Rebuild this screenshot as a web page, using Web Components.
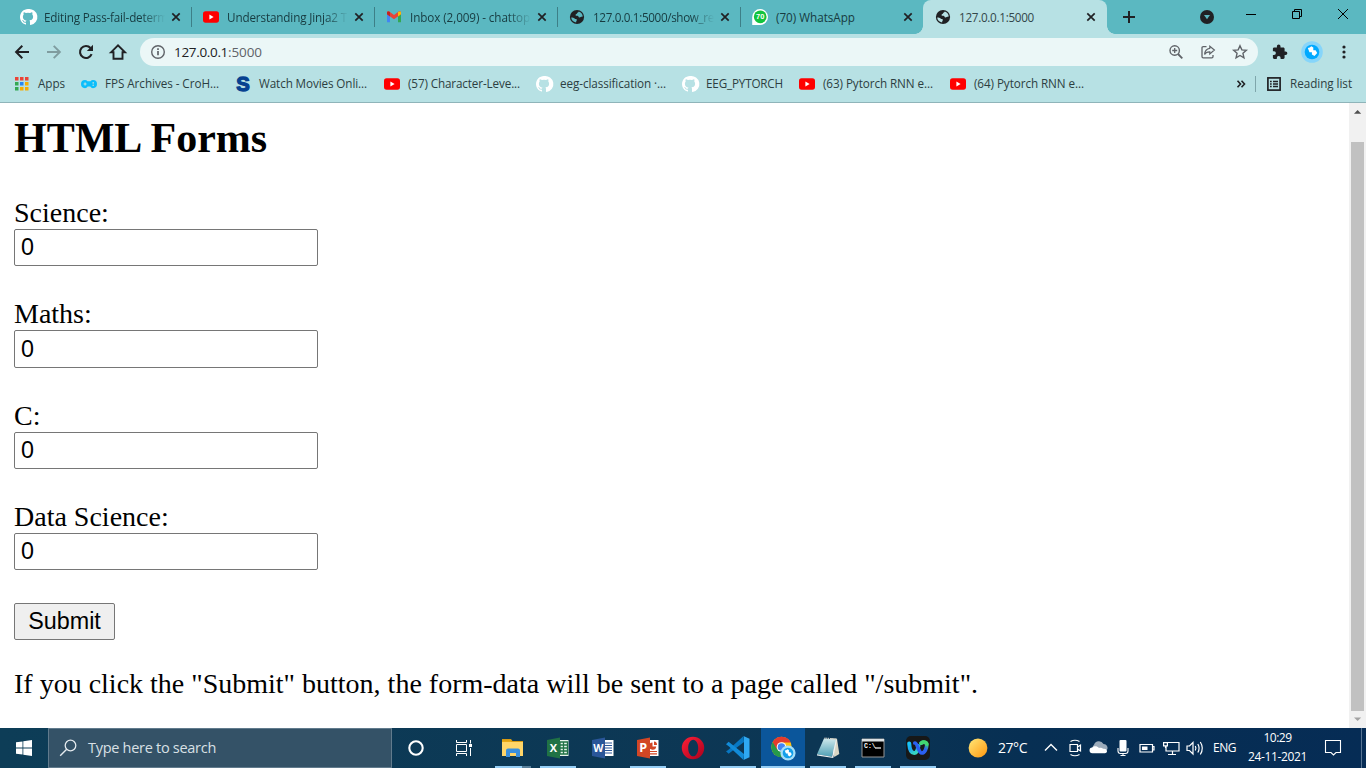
<!DOCTYPE html>
<html lang="en">
<head>
<meta charset="utf-8">
<title>127.0.0.1:5000</title>
<style>
html,body{margin:0;height:100%;overflow:hidden;background:#fff}
</style>
</head>
<body>
<desktop-screen></desktop-screen>
<script>
const octo='<path fill="#fff" d="M8 0C3.6 0 0 3.6 0 8c0 3.5 2.3 6.500 5.500 7.600.4.100.5-.2.5-.4V13.700c-2.200.5-2.700-.9-2.700-.9-.4-.9-.9-1.200-.9-1.200-.7-.5.1-.5.1-.5.8.1 1.200.8 1.200.8.700 1.200 1.900.9 2.300.7.100-.5.3-.9.5-1.100-1.800-.2-3.600-.9-3.600-4 0-.9.300-1.600.8-2.100-.1-.2-.4-1 .1-2.100 0 0 .7-.2 2.200.8a7.500 7.500 0 0 1 4 0c1.500-1 2.200-.8 2.200-.8.4 1.100.2 1.900.1 2.100.500.600.8 1.300.8 2.100 0 3.100-1.900 3.700-3.700 3.900.3.300.6.800.6 1.500v2.700c0 .2.100.5.600.4A8 8 0 0 0 8 0Z"/>';
const ICONS={
github:[16,16,octo],
youtube:[16,16,'<rect x="0" y="2.300" width="16" height="11.400" rx="2.600" fill="#f00"/><path d="M6.400 5.600v4.800L10.600 8Z" fill="#fff"/>'],
gmail:[16,16,'<path d="M1 4v9.300h3V7z" fill="#4285f4"/><path d="M15 4v9.300h-3V7z" fill="#34a853"/><path d="M1 3.800C1 2.400 2.700 2 3.600 2.700L8 6l4.400-3.300C13.300 2 15 2.400 15 3.800V5.300L8 10.300 1 5.300Z" fill="#ea4335"/><path d="M1 3.800C1 2.400 2.700 2 4 3.100V7.400L1 5.300Z" fill="#c5221f"/><path d="M15 3.800C15 2.400 13.300 2 12 3.100V7.400l3-2.100Z" fill="#fbbc04"/>'],
globe:[16,16,'<circle cx="8" cy="8" r="7.100" fill="#202124"/><path d="M2.200 8.600c1.400.1 2.600.1 3.400.8.7.7 2 .5 2.300 1.300.2.900-.9 1-.8 2.800C4.200 13.200 2.300 11 2.200 8.600ZM9.800 2.500c-.2.900-1.600.9-1.700 1.800-.1.800-1.500.6-1.500 1.600s1 .8 1.900.8c1 0 .8 1.600 2 1.700 1.100.1 1.100-1 3.300-.9C13.500 5 12 3.200 9.800 2.500Z" fill="var(--cut,#5bb8c1)"/>'],
whatsapp:[16,16,'<path d="M.2 16V8A7.900 7.900 0 1 1 8 15.900Z" fill="#fff"/><circle cx="8.200" cy="7.800" r="6.400" fill="#12c43e"/><text x="8.200" y="10.400" font-family="Liberation Sans,sans-serif" font-size="7.500" font-weight="700" fill="#fff" text-anchor="middle">70</text>'],
close:[16,16,'<path d="m4.300 4.300 7.400 7.400m0-7.400-7.400 7.400" stroke="#202124" stroke-width="1.700"/>'],
plus:[16,16,'<path d="M8 2v12M2 8h12" stroke="#202124" stroke-width="2"/>'],
down:[16,16,'<circle cx="8" cy="8" r="7" fill="#202124"/><path d="M5 6h6l-3 4.200Z" fill="#5bb8c1"/>'],
min:[12,12,'<path d="M1 6.500h10" stroke="#000"/>'],
max:[12,12,'<path d="M1.500 3.500h7v7h-7zM3.500 3.500v-2h7v7h-2" fill="none" stroke="#000"/>'],
x:[12,12,'<path d="m1 1 10 10m0-10L1 11" stroke="#000" stroke-width="1"/>'],
back:[16,16,'<path d="M15 8H2.500M8.300 1.800 2.100 8l6.200 6.200" fill="none" stroke="#202124" stroke-width="2"/>'],
fwd:[16,16,'<path d="M1 8h12.500M7.700 1.800 13.900 8l-6.200 6.200" fill="none" stroke="#7f9c9f" stroke-width="1.900"/>'],
reload:[16,16,'<path d="M13.600 10.200A6 6 0 1 1 12.500 4" fill="none" stroke="#202124" stroke-width="2.100"/><path d="M15 .8V7H8.800Z" fill="#202124"/>'],
home:[18,18,'<path d="M2 9.300 9 2.300l7 7H13.500v6.400h-9V9.300Z" fill="none" stroke="#202124" stroke-width="1.900"/>'],
info:[16,16,'<circle cx="8" cy="8" r="6.300" fill="none" stroke="#5f6368" stroke-width="1.400"/><path d="M8 7v4.300M8 4.300v1.600" stroke="#5f6368" stroke-width="1.700"/>'],
zoom:[16,16,'<circle cx="6.700" cy="6.500" r="4.700" fill="none" stroke="#5f6368" stroke-width="1.400"/><path d="m10 10 4.300 4.300" stroke="#5f6368" stroke-width="1.800"/><path d="M6.700 4v5M4.200 6.500h5" stroke="#5f6368" stroke-width="1.300"/>'],
share:[16,16,'<path d="M6.500 2.600H3.200Q2 2.600 2 3.800v8.800q0 1.200 1.200 1.200h8.600q1.200 0 1.200-1.200V11" fill="none" stroke="#5f6368" stroke-width="1.300"/><path d="M9.800 2.200 14.400 6 9.800 9.900V7.800C7.200 7.700 5.700 8.500 4.600 10.500 4.800 7.200 6.500 4.700 9.800 4.300Z" fill="none" stroke="#5f6368" stroke-width="1.200"/>'],
star:[16,16,'<path d="m8 1.700 1.850 4.150 4.500.45-3.400 3 1 4.500L8 11.500l-3.950 2.300 1-4.500-3.400-3 4.500-.45Z" fill="none" stroke="#5f6368" stroke-width="1.400"/>'],
puzzle:[16,16,'<path d="M13.600 7.500h-1V4.700c0-.7-.6-1.300-1.300-1.300H8.500V2.300a1.800 1.800 0 0 0-3.600 0v1.100H2.200C1.500 3.400.9 4 .9 4.700v2.500H2a1.900 1.900 0 0 1 0 3.800H.9v2.600c0 .7.600 1.300 1.300 1.300h2.600v-1a1.900 1.900 0 0 1 3.800 0v1h2.700c.7 0 1.300-.6 1.300-1.300V11h1a1.750 1.750 0 0 0 0-3.500Z" fill="#202124"/>'],
avatar:[22,22,'<circle cx="11" cy="11" r="10.800" fill="#86d5fa"/><circle cx="11" cy="11" r="7.300" fill="#00a9ff"/><path d="M6.800 7q2.200 0 3.500-1.700l2 1.200v2.800h2.300l1.600 2.600-2.700 3-2.600-1.500v-2.200H8.500Z" fill="#fff"/>'],
dots:[16,16,'<g fill="#202124"><circle cx="8" cy="3" r="1.600"/><circle cx="8" cy="8" r="1.600"/><circle cx="8" cy="13" r="1.600"/></g>'],
apps:[14,14,'<g><path fill="#ea4335" d="M0 0h3.500v3.500H0zM5 0h3.500v3.500H5zM10 0h3.500v3.500H10z"/><path fill="#34a853" d="M0 5h3.500v3.500H0zM0 10h3.500v3.500H0z"/><path fill="#2787f5" d="M5 5h3.500v3.500H5z"/><path fill="#f6ad05" d="M10 5h3.500v3.500H10zM5 10h3.500v3.500H5zM10 10h3.500v3.500H10z"/></g>'],
pad:[16,16,'<path d="M4 4q1.600 0 2.500 1.200h3Q10.400 4 12 4a4 4.100 0 0 1 0 8.200q-1.800 0-2.700-1.600H6.700Q5.800 12.200 4 12.200A4 4.100 0 0 1 4 4Z" fill="#0cbefb"/><path d="M2.600 8h3M4.100 6.500v3" stroke="#b7e1e4" stroke-width="1.200"/><circle cx="12.200" cy="6.900" r=".8" fill="#b7e1e4"/><circle cx="12.200" cy="9.300" r=".8" fill="#b7e1e4"/>'],
ess:[16,16,'<text x="8" y="15" text-anchor="middle" font-family="Liberation Sans,sans-serif" font-weight="700" font-size="20" textLength="13.500" lengthAdjust="spacingAndGlyphs" fill="#074190" stroke="#074190" stroke-width="1.300">S</text>'],
more:[10,10,'<path d="m1.500 1.800 3 3.200-3 3.200M5.500 1.800l3 3.200-3 3.200" fill="none" stroke="#202124" stroke-width="1.600"/>'],
list:[16,16,'<rect x="1.900" y="1.900" width="12.200" height="12.200" fill="none" stroke="#202124" stroke-width="1.700"/><path d="M4 5.500h1.700M4 8h1.700M4 10.500h1.700M7 5.500h5M7 8h5M7 10.500h5" stroke="#202124" stroke-width="1.300"/>'],
windows:[16,16,'<path d="M0 2.300 6.500 1.400v6.200H0zM7.300 1.200 16 0v7.600H7.300zM0 8.400h6.500v6.200L0 13.700zM7.300 8.400H16V16l-8.700-1.200z" fill="#fff"/>'],
search:[18,18,'<circle cx="11.500" cy="6.500" r="5.300" fill="none" stroke="#e4eaee" stroke-width="1.300"/><path d="m7.700 10.300-6.500 6.500" stroke="#e4eaee" stroke-width="1.400"/>'],
cortana:[18,18,'<circle cx="9" cy="9" r="6.700" fill="none" stroke="#fff" stroke-width="2.100"/>'],
task:[18,18,'<path d="M1.500 1v2.500h10V1M1.500 17v-2.500h10V17M1.500 5.500h10v7h-10zM15.500 1v3.500M15.500 9v8" fill="none" stroke="#fff"/><path d="M14 5h3v3h-3z" fill="#fff"/>'],
explorer:[24,24,'<path d="M1 3h9l1.500 2H22v4H1z" fill="#d79a13"/><path d="M1 6h21v14H1z" fill="#ffd568"/><path d="M1 6h9l1-1.500H1z" fill="#e9a916"/><path d="M5 14.500q0-2 2-2h10q2 0 2 2V21h-4v-4H9v4H5z" fill="#3a8fdc"/>'],
excel:[24,24,'<path d="M13 4h9.500v16H13z" fill="#e6f3ea"/><path d="M14 6h7.500v12H14zM14 9h7.500M14 12h7.500M14 15h7.500M17.500 6v12" fill="none" stroke="#207245" stroke-width="1.300"/><path d="M1 4 14 1.500v21L1 20z" fill="#207245"/><text x="7.300" y="16" font-family="Open Sans,sans-serif" font-size="11" font-weight="700" fill="#fff" text-anchor="middle">X</text>'],
word:[24,24,'<path d="M13 4h9.500v16H13z" fill="#fff"/><path d="M14 7h7M14 9.500h7M14 12h7M14 14.500h7M14 17h7" stroke="#2a5699" stroke-width="1.200"/><path d="M1 4 14 1.500v21L1 20z" fill="#2a5699"/><text x="7.400" y="16" font-family="Open Sans,sans-serif" font-size="10.500" font-weight="700" fill="#fff" text-anchor="middle">W</text>'],
ppt:[24,24,'<path d="M13 4h9.500v16H13z" fill="#fff"/><path d="M16.500 6.500A3.600 3.600 0 1 0 20.200 10.500H16.500Z" fill="#d24625"/><path d="M18 5.600v3.400h3A3.300 3.300 0 0 0 18 5.600Z" fill="#d24625"/><path d="M14 15.500h7M14 17.800h7" stroke="#d24625" stroke-width="1.200"/><path d="M1 4 14 1.500v21L1 20z" fill="#d24625"/><text x="7.300" y="16.300" font-family="Open Sans,sans-serif" font-size="12.500" font-weight="700" fill="#fff" text-anchor="middle">P</text>'],
opera:[24,24,'<defs><linearGradient id="o" x1="0" y1="0" x2="1" y2="1"><stop offset="0" stop-color="#ff2038"/><stop offset="1" stop-color="#a8001c"/></linearGradient></defs><path fill-rule="evenodd" fill="url(#o)" d="M12 .8a11.200 11.200 0 1 0 0 22.400A11.200 11.200 0 0 0 12 .8Zm.2 2.900c2.900 0 5 3.700 5 8.300s-2.100 8.300-5 8.300S7.200 16.600 7.200 12s2.100-8.300 5-8.300Z"/>'],
vscode:[24,24,'<path d="M18 6v12l-7.500-6Z" fill="none"/><path d="M17.500 0 3.600 12.700 1.800 14.200 0 15.300l2.600 2.400L18 6Z" fill="#0877c2"/><path d="M17.500 24 3 10.500 0 8.200l2.600-2.400L18 18Z" fill="#128bd8"/><path d="m17.500 0 6 2.800v18.400l-6 2.800q.5-.4.500-1.200V1.200q0-.8-.5-1.200z" fill="#2fa8f2"/>'],
chrome:[24,24,'<circle cx="10.500" cy="11" r="10.200" fill="#fbc116"/><path d="M10.500 11 1.700 5.900A10.200 10.200 0 0 0 10 21.200l4.600-8Z" fill="#269a49"/><path d="M10.500 11 6 13.500 1.700 5.900A10.200 10.200 0 0 1 19.800 6.500H10.500z" fill="#e33b2e"/><circle cx="10.500" cy="11" r="4.800" fill="#fff"/><circle cx="10.500" cy="11" r="3.800" fill="#4285f4"/><circle cx="17" cy="17" r="7.600" fill="#a3def9"/><circle cx="17" cy="17" r="5.300" fill="#129fea"/><path d="M13.700 14.500q1.600 0 2.700-1.200l1.500.8v2.200h1.600l1.300 2-2 2.200-2-1.200v-1.700H15Z" fill="#fff"/>'],
note:[24,24,'<path d="m14 2 7 .8L23.300 18l-5 3z" fill="#d9d6c5"/><defs><linearGradient id="n" x1="0" y1="0" x2="0" y2="1"><stop stop-color="#cfe9ec"/><stop offset="1" stop-color="#4d9fb5"/></linearGradient></defs><path d="M8 2.500 20 3.500 16 20.800 1 18.200Z" fill="url(#n)"/><path d="m1 18.200 15 2.600L20 3.500l.8.500L17.300 22 1 19.500z" fill="#eef3f3"/><path d="m8.500 2.200 12 1" stroke="#cfcfc8" stroke-dasharray="1 .8" stroke-width="1.500"/>'],
cmd:[24,24,'<path d="M1 3h22v18H1z" fill="#000" stroke="#969696"/><path d="M1 3h22v2.500H1z" fill="#dce1e3"/><text x="3" y="11.800" font-family="Liberation Mono,monospace" font-size="6.500" font-weight="700" fill="#fff">C:\\</text><path d="M14 12h6" stroke="#fff" stroke-width="1.200"/>'],
webex:[24,24,'<defs><linearGradient id="a" x1="0" y1="0" x2=".6" y2="1"><stop stop-color="#17c6f8"/><stop offset=".5" stop-color="#1fa8f2"/><stop offset="1" stop-color="#38d7bf"/></linearGradient><linearGradient id="b" x1="1" y1="0" x2="0" y2="1"><stop stop-color="#42d772"/><stop offset=".4" stop-color="#2b62f0"/><stop offset="1" stop-color="#2a5cf0"/></linearGradient></defs><rect width="24" height="24" rx="5" fill="#171818"/><path d="M3.200 7.500C3.500 12 5 17 8.200 17s3.800-4.500 4.200-7" fill="none" stroke="url(#a)" stroke-width="4" stroke-linecap="round"/><path d="M15 7.200c3-2 6-.8 5.800 1.800-.3 3.500-2 8-5 8-3.600 0-4-10-7-10" fill="none" stroke="url(#b)" stroke-width="3.700" stroke-linecap="round"/><path d="M15 7.200c2.500-1.700 5-1.200 5.700.8" fill="none" stroke="#42d772" stroke-width="3.700" stroke-linecap="round"/>'],
sun:[20,20,'<defs><linearGradient id="s" x1="0" y1="0" x2="1" y2="1"><stop stop-color="#ffe879"/><stop offset="1" stop-color="#ff970e"/></linearGradient></defs><circle cx="10" cy="10" r="9.400" fill="url(#s)"/>'],
chev:[24,24,'<path d="m6 14.500 6-6 6 6" fill="none" stroke="#fff" stroke-width="1.400"/>'],
meet:[24,24,'<path d="M7 8.500h7.500v7H7zM14.500 11l3-2v6l-3-2M7.500 5.500q4.500-2.500 9 0M7.500 18.500q4.500 2.500 9 0" fill="none" stroke="#fff" stroke-width="1.200"/>'],
cloud:[24,24,'<path d="M7 15a4 4 0 0 1 0-6.300 5.300 5.300 0 0 1 9.500-.8A4 4 0 0 1 20 14Z" fill="#9cabba"/><path d="M5.500 17.200a2.800 2.800 0 0 1-.3-5.600c2-2.100 5-1.700 6.800.4 1-.6 3-.4 4 .8 3-.4 4.500 1.400 3.900 3.300q-.4 1.100-1.900 1.100Z" fill="#fff"/>'],
mic:[24,24,'<rect x="8.500" y="4" width="7" height="11.500" rx="1" fill="#fff"/><path d="M7 12v3q0 2.500 2.500 2.500h5q2.500 0 2.500-2.500v-3M12 17.500v2M9.500 19.500h5" fill="none" stroke="#fff" stroke-width="1.100"/>'],
battery:[24,24,'<path d="M5 8.500h12.500v7.500H5zM17.500 10.500H19V14h-1.500" fill="none" stroke="#fff" stroke-width="1.200"/><path d="M7 10.500h5.500V14H7z" fill="#fff"/>'],
net:[24,24,'<path d="M9 6.500h11v8.500H7V10M13.500 15v3.500M9 18.500h8" fill="none" stroke="#fff" stroke-width="1.200"/><path d="M4.600 6.600h3.800v3.300H4.600zM6.500 10v2" fill="none" stroke="#fff" stroke-width="1.200"/>'],
volume:[24,24,'<path d="M4 10v4.500h2.500l3.500 3.500V6.500L6.500 10Z" fill="none" stroke="#fff" stroke-width="1.200"/><path d="M12.300 10q1.300 2.200 0 4.500M14.800 8q2.600 4.200 0 8.500M17.300 6q4 6.200 0 12.500" fill="none" stroke="#fff" stroke-width="1.200"/>'],
action:[18,18,'<path d="M1.500 1.500h15V13.500h-4.500L9.500 16 7 13.500H1.500Z" fill="none" stroke="#fff" stroke-width="1.100"/>'],
up:[9,6,'<path d="M0 5 4.500.5 9 5z" fill="#505050" transform="translate(1 .7) scale(.8)"/>'],
dn:[9,6,'<path d="M0 1 4.500 5.500 9 1z" fill="#a3a3a3" transform="translate(1 .7) scale(.8)"/>']
};
function define(name,render,after){
  customElements.define(name,class extends HTMLElement{
    connectedCallback(){
      if(this.shadowRoot)return;
      this.attachShadow({mode:'open'}).innerHTML=render(this);
      if(after)after(this);
    }
  });
}
define('ui-icon',e=>{
  const [w,h,body]=ICONS[e.getAttribute('name')];
  const s=+(e.getAttribute('size')||w);
  return `<style>:host{display:block;flex:none;width:${s}px;height:${s*h/w}px}svg{display:block;width:100%;height:100%;overflow:visible}</style><svg viewBox="0 0 ${w} ${h}">${body}</svg>`;
});
/* A single line of text whose letter spacing is tuned to a given measure. */
define('ui-label',()=>`<style>:host{display:block;flex:none;white-space:nowrap}span{display:inline-block}</style><span><slot></slot></span>`,e=>{
  const w=+e.getAttribute('w'),s=e.shadowRoot.querySelector('span');
  if(w){e.style.width=w+'px';const n=s.getBoundingClientRect().width;s.style.letterSpacing=((w-n)/e.textContent.length)+'px';}
});
define('browser-tab',e=>`<style>
:host{display:flex;align-items:center;box-sizing:border-box;flex:none;width:183px;height:34px;padding-left:12px;position:relative;--cut:#5bb8c1}
:host([active]){width:184px;background:#b7e1e4;border-radius:8px 8px 0 0;--cut:#b7e1e4;color:#33474a}
.t{width:126px;margin:0 -2px 0 8px;overflow:hidden}
:host([fade]) .t{-webkit-mask-image:linear-gradient(90deg,#000 98px,transparent 121px)}
i{position:absolute;right:-1px;top:7px;width:1px;height:20px;background:#3d7f87}
b{position:absolute;bottom:0;width:8px;height:8px}
.l{left:-8px;background:radial-gradient(circle at 0 0,transparent 7.500px,#b7e1e4 8px)}
.r{right:-8px;background:radial-gradient(circle at 100% 0,transparent 7.500px,#b7e1e4 8px)}
</style><ui-icon name="${e.getAttribute('icon')}"></ui-icon><div class="t"><ui-label w="${e.getAttribute('w')}">${e.getAttribute('label')}</ui-label></div><ui-icon name="close"></ui-icon>${e.hasAttribute('line')?'<i></i>':''}${e.hasAttribute('active')?'<b class="l"></b><b class="r"></b>':''}`);
define('tab-strip',()=>`<style>
:host{display:flex;height:34px;background:#5bb8c1;padding-left:8px;align-items:center;color:#173b40}
.n{margin-left:14px}.d{margin-left:62px}.m{margin:-6px 0 0 30px}.x{margin:-6px 0 0 34px}.c{margin:-6px 0 0 34px}
</style>
<browser-tab icon="github" label="Editing Pass-fail-determ" w="124" fade line></browser-tab>
<browser-tab icon="youtube" label="Understanding Jinja2 T" w="120" fade line></browser-tab>
<browser-tab icon="gmail" label="Inbox (2,009) - chattop" w="120" fade line></browser-tab>
<browser-tab icon="globe" label="127.0.0.1:5000/show_re" w="121" fade line></browser-tab>
<browser-tab icon="whatsapp" label="(70) WhatsApp" w="79"></browser-tab>
<browser-tab icon="globe" label="127.0.0.1:5000" w="75" active></browser-tab>
<ui-icon class="n" name="plus"></ui-icon><ui-icon class="d" name="down"></ui-icon><ui-icon class="m" name="min"></ui-icon><ui-icon class="x" name="max"></ui-icon><ui-icon class="c" name="x"></ui-icon>`);
define('address-bar',()=>`<style>
:host{display:flex;align-items:center;height:36px;padding-left:14px;background:#b7e1e4}
.nav{display:flex;align-items:center;gap:16px;width:126px}
.box{display:flex;align-items:center;width:1118px;height:28px;border-radius:14px;background:#ebf7f7;box-sizing:border-box;padding:0 10px;font-size:13.500px}
.box>:first-child{margin-right:8px}.a{color:#202124}.p{color:#5f6368}
.right{display:flex;gap:16px;margin-left:auto}
.ext{display:flex;align-items:center;margin-left:14px;gap:13px}
</style><div class="nav"><ui-icon name="back"></ui-icon><ui-icon name="fwd"></ui-icon><ui-icon name="reload"></ui-icon><ui-icon name="home" style="margin-left:-1px"></ui-icon></div>
<div class="box"><ui-icon name="info"></ui-icon><ui-label class="a" w="54">127.0.0.1</ui-label><ui-label class="p" w="34">:5000</ui-label><div class="right"><ui-icon name="zoom"></ui-icon><ui-icon name="share"></ui-icon><ui-icon name="star"></ui-icon></div></div>
<div class="ext"><ui-icon name="puzzle"></ui-icon><ui-icon name="avatar"></ui-icon><ui-icon name="dots"></ui-icon></div>`);
define('book-mark',e=>`<style>:host{display:flex;align-items:center;flex:none;gap:8px}ui-label{margin-bottom:2px}</style><ui-icon name="${e.getAttribute('icon')}"></ui-icon><ui-label w="${e.getAttribute('w')}"><slot></slot></ui-label>`,
e=>{const l=e.shadowRoot.querySelector('ui-label'),s=l.shadowRoot.querySelector('span'),w=+e.getAttribute('w');s.style.letterSpacing='0';const n=s.getBoundingClientRect().width;s.style.letterSpacing=((w-n)/e.textContent.length)+'px';});
define('bookmarks-bar',()=>`<style>
:host{display:flex;align-items:center;height:32px;box-sizing:border-box;padding:0 14px 4px 15px;background:#b7e1e4;border-bottom:0;color:#2c3e41}
book-mark{margin-right:17px}.end{display:flex;align-items:center;margin-left:auto}
i{width:1px;height:16px;background:#7fa6ab;margin:0 10px 0 9px}.end book-mark{margin:0}
</style>
<book-mark icon="apps" w="27" style="margin-right:16px;gap:9px">Apps</book-mark>
<book-mark icon="pad" w="114" style="margin-right:16px">FPS Archives - CroH...</book-mark>
<book-mark icon="ess" w="108">Watch Movies Onli...</book-mark>
<book-mark icon="youtube" w="112" style="margin-right:16px">(57) Character-Leve...</book-mark>
<book-mark icon="github" w="106" style="margin-right:16px">eeg-classification ·...</book-mark>
<book-mark icon="github" w="77" style="margin-right:16px">EEG_PYTORCH</book-mark>
<book-mark icon="youtube" w="110">(63) Pytorch RNN e...</book-mark>
<book-mark icon="youtube" w="110">(64) Pytorch RNN e...</book-mark>
<div class="end"><ui-icon name="more"></ui-icon><i></i><book-mark icon="list" w="62">Reading list</book-mark></div>`);
define('form-field',()=>`<style>
:host{display:block;height:101.400px}
label{display:block;height:32px;line-height:32px}
input{display:block;box-sizing:border-box;width:304px;height:37.300px;margin:0;border:1px solid #767676;border-radius:2px;padding:0 6px;font:23.333px "Liberation Sans",Arial,sans-serif;color:#000;background:#fff}
</style><label><slot></slot></label><input value="0">`);
define('page-view',()=>`<style>
:host{display:flex;height:625px;border-top:1px solid #8fb4b9;background:#fff;color:#000;font:28px "Liberation Serif","Times New Roman",serif}
main{flex:1;padding:12px 14px 0}
h2{font-size:42px;line-height:47px;margin:0 0 35px}
button{display:block;box-sizing:border-box;width:101px;height:37px;margin:.4px 0 0;padding:0;border:1px solid #767676;border-radius:2px;background:#efefef;color:#000;font:23.333px "Liberation Sans",Arial,sans-serif}
p{margin:28px 0 0;line-height:32px;white-space:nowrap}
aside{display:flex;flex-direction:column;align-items:center;width:17px;background:#f1f1f1;box-sizing:border-box;padding:6px 0 6px}
.th{width:13px;height:569px;margin:27px 0 auto;background:#c1c1c1}
</style><main><h2>HTML Forms</h2>
<form-field>Science:</form-field><form-field>Maths:</form-field><form-field>C:</form-field><form-field>Data Science:</form-field>
<button type="button">Submit</button>
<p>If you click the "Submit" button, the form-data will be sent to a page called "/submit".</p></main>
<aside><ui-icon name="up"></ui-icon><div class="th"></div><ui-icon name="dn"></ui-icon></aside>`);
define('task-item',e=>`<style>
:host{display:flex;position:relative;flex:none;width:45px;height:40px;align-items:center;justify-content:center}
:host([active]){background:linear-gradient(#0b569b,#0b569b) 1px 0/44px 100% no-repeat}
i{position:absolute;bottom:0;left:5px;width:36px;height:2px;background:#94cdf5}
:host([active]) i{left:1px;width:44px}
:host([multi]) i{background:linear-gradient(90deg,#94cdf5 27px,#58809b 27px)}
</style><ui-icon name="${e.getAttribute('icon')}"></ui-icon>${e.hasAttribute('open')?'<i></i>':''}`);
define('system-tray',()=>`<style>
:host{display:flex;align-items:center;height:40px;flex:none;width:398px;color:#fff;font-size:12px}
.tmp{font-size:14px;margin:0 11.500px 0 10px}
.eng{margin-left:6.500px}
.clk{display:flex;flex-direction:column;align-items:center;margin:0 17px 0 12px;line-height:18px}
.clk :first-child{margin:-1px 0 1px}
.edge{width:1px;height:40px;background:#577493;margin-left:19px}
</style><ui-icon name="sun"></ui-icon><ui-label class="tmp" w="29">27°C</ui-label>
<ui-icon name="chev"></ui-icon><ui-icon name="meet"></ui-icon><ui-icon name="cloud"></ui-icon><ui-icon name="mic"></ui-icon><ui-icon name="battery"></ui-icon><ui-icon name="net"></ui-icon><ui-icon name="volume"></ui-icon>
<ui-label class="eng" w="23">ENG</ui-label><div class="clk"><ui-label w="28">10:29</ui-label><ui-label w="59">24-11-2021</ui-label></div><ui-icon name="action"></ui-icon><div class="edge"></div>`);
define('task-bar',()=>`<style>
:host{display:flex;align-items:center;height:40px;background:linear-gradient(90deg,#0d3d57,#0c3654 60%,#072f53 75%,#062c55)}
.start{width:48px;display:flex;justify-content:center}
.s{display:flex;align-items:center;width:344px;height:40px;box-sizing:border-box;border:1px solid #617b8d;background:#345267;padding-left:10px;color:#d9e0e5;font-size:14.500px}
.s ui-label{margin-left:11px}
.q{display:flex;gap:30px;margin:0 17px 0 15px}
system-tray{margin-left:28px}
</style><div class="start"><ui-icon name="windows"></ui-icon></div>
<div class="s"><ui-icon name="search"></ui-icon><ui-label w="128">Type here to search</ui-label></div>
<div class="q"><ui-icon name="cortana"></ui-icon><ui-icon name="task"></ui-icon></div>
<task-item icon="explorer" open multi></task-item><task-item icon="excel" open></task-item><task-item icon="word"></task-item><task-item icon="ppt" open></task-item><task-item icon="opera"></task-item><task-item icon="vscode" open></task-item><task-item icon="chrome" open active></task-item><task-item icon="note" open></task-item><task-item icon="cmd" open></task-item><task-item icon="webex" open></task-item>
<system-tray></system-tray>`);
define('desktop-screen',()=>`<style>:host{display:flex;flex-direction:column;width:1366px;height:768px;overflow:hidden;font:11.700px/18px "Open Sans","Noto Sans",sans-serif}</style>
<tab-strip></tab-strip><address-bar></address-bar><bookmarks-bar></bookmarks-bar><page-view></page-view><task-bar></task-bar>`);
</script>
</body>
</html>
